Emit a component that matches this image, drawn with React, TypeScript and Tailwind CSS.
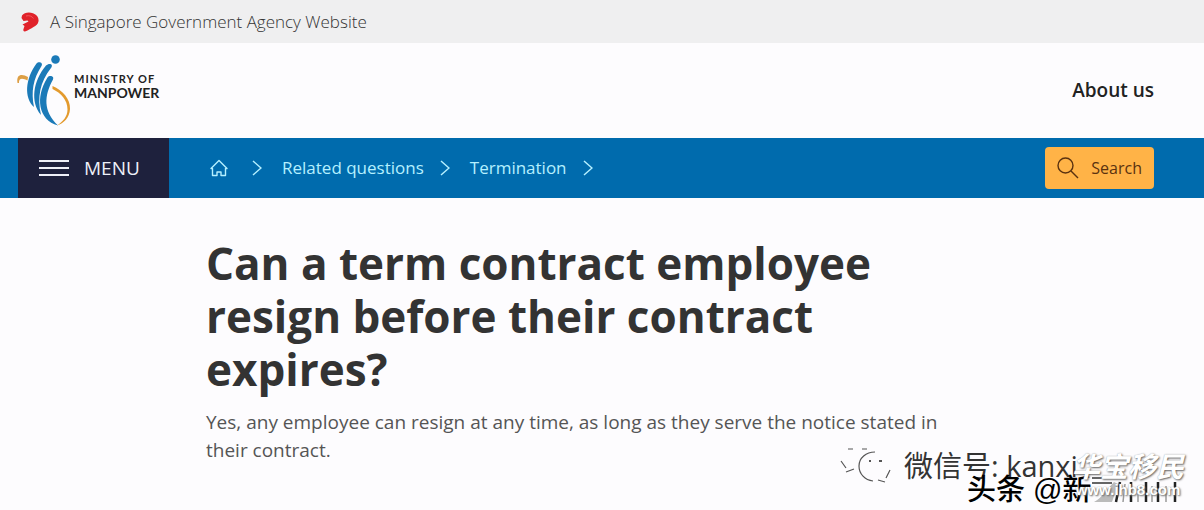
import { Fragment } from "react";

const breadcrumbs = [
  { label: "Related questions", href: "#related" },
  { label: "Termination", href: "#termination" },
];

function LionIcon() {
  return (
    <svg className="h-5 w-5" viewBox="0 0 20 20" aria-hidden="true">
      <path
        d="M2 3.500C4 .5 9-.2 13 1.200c4 1.300 6 4.800 5.500 8-.4 3-2.500 4.300-5 5.800-2.500 1.600-5 3.200-8.500 4.500-1.500.3-2-1-1.500-2.500L4.500 14 2.500 12.500 8.500 9.500 7.500 8.500 3.500 9 1.500 6z"
        fill="#e0222a"
      />
      <path d="M6 4c3-.8 6 0 7.500 2.500" fill="none" stroke="#f0565a" strokeWidth="1" />
    </svg>
  );
}

function MinistryLogo() {
  return (
    <svg className="h-[74px] w-14" viewBox="0 0 56 74" aria-hidden="true">
      <path d="M1.500 29C0 20 6 19.500 12 23l-.5 3.500C7 24 2.500 23.500 3 29z" fill="#dd9f45" />
      <path d="M36.500 32c10 4 18 13 17.500 23-.6 9-6 14-13 16.500 6-4 10.500-9 10.500-16C51.500 46 45 39 36.500 35z" fill="#e39a2d" />
      <circle cx="39.500" cy="5.500" r="4.300" fill="#1b7ab8" />
      <path d="M20.500 9.500c2-2.500 7-1 5 2.500C17 25 15 38 18 53 8 44 9 25 20.500 9.500z" fill="#1b7ab8" />
      <path d="M30 11.500c3-3 8-1.500 5 2.500C24 28 21 43 25 61 14 48 17 27 30 11.500z" fill="#1b7ab8" />
      <path d="M31.500 23.500c2-2.500 7-1.500 5.500 2C28 42 27 57 42 71.500 22 66 19 43 31.500 23.500z" fill="#1b7ab8" />
    </svg>
  );
}

function HomeIcon() {
  return (
    <svg className="h-[18px] w-[18px]" viewBox="0 0 18 18" fill="none" stroke="currentColor" strokeWidth="1.400" aria-hidden="true">
      <path d="M1 9.500 9 1.500l8 8h-1.500v7H11v-3.500H7v3.500H2.500v-7z" strokeLinejoin="round" />
    </svg>
  );
}

function Chevron() {
  return (
    <svg className="h-4 w-2.5" viewBox="0 0 10 16" fill="none" stroke="currentColor" strokeWidth="1.500" aria-hidden="true">
      <path d="M1 1l8 7-8 7" />
    </svg>
  );
}

function WeChatIcon() {
  return (
    <svg className="h-10 w-[52px]" viewBox="0 0 52 40" fill="none" stroke="#555" strokeWidth="1.200" aria-hidden="true">
      <path d="M8 3h5M22 3h5M1 15l5 7M6 26l8-3M35 6c-9 0-16 6-16 14 0 8 6 14 14 15M38 34l7 2M46 32l4-8" />
      <path d="M29 15h2M39 15h3" strokeWidth="2" />
    </svg>
  );
}

function Streaks() {
  return (
    <svg className="h-7 w-[90px]" viewBox="0 0 90 28" aria-hidden="true">
      <path d="M0 2h26M0 7h20" stroke="#333" strokeWidth="1.500" />
      <path d="M2 26C10 22 14 14 22 6l4 2-6 18z" fill="#bbb" />
      <path d="M28 6l-4 20M39 6v20M54 6v20M66 6v20M83 6v20" stroke="#222" strokeWidth="2.500" />
      <path d="M33 8l-2 18M46 10v16M60 10v16M74 10v16" stroke="#999" strokeWidth="1.500" />
    </svg>
  );
}

function Watermarks() {
  return (
    <div className="pointer-events-none absolute right-0 bottom-0 h-[68px] w-[368px] font-['Open_Sans','Noto_Sans_CJK_SC',sans-serif] whitespace-nowrap">
      <div className="absolute top-1 left-1 flex items-center gap-3">
        <WeChatIcon />
        <span className="text-[29px] leading-10 text-[#333]">微信号: kanxi</span>
      </div>
      <div className="absolute top-[30px] left-[131px] flex items-center font-['Liberation_Sans','Noto_Sans_CJK_SC',sans-serif]">
        <span className="text-[29px] leading-9 font-medium text-black">头条 @新</span>
        <Streaks />
      </div>
      <div className="absolute top-2 right-4 flex w-[120px] flex-col items-center text-white [text-shadow:1px_1px_2px_#666,0_0_1px_#aaa]">
        <span className="text-[28px] leading-8 font-bold italic">华宝移民</span>
        <span className="font-['Liberation_Sans',sans-serif] text-[15px] leading-4 font-bold">www.ihb8.com</span>
      </div>
    </div>
  );
}

export default function App() {
  return (
    <div className="relative min-h-screen overflow-hidden bg-[#fdfcfe] font-['Open_Sans',sans-serif] text-[#333]">
      <div className="flex h-[43px] items-center gap-2.5 bg-[#efeff0] px-5 text-[#333]">
        <LionIcon />
        <span className="text-[17px] font-light">A Singapore Government Agency Website</span>
      </div>

      <header className="flex h-[95px] items-center justify-between pr-[50px] pl-4">
        <a href="#home" className="flex items-center gap-0.5 text-[#222]">
          <MinistryLogo />
          <span className="flex flex-col pb-2 font-['Lato',sans-serif] font-bold">
            <span className="text-[11px] leading-3 tracking-widest">MINISTRY OF</span>
            <span className="text-sm leading-4">MANPOWER</span>
          </span>
        </a>
        <a href="#about" className="text-[19px] font-semibold text-[#222]">About us</a>
      </header>

      <nav className="flex h-[60px] items-center bg-[#006bad] pr-[50px] pl-[18px]">
        <button className="flex h-full w-[151px] items-center gap-[15px] bg-[#1e213d] pl-[21px] text-[19px] text-[#eef0f8]">
          <svg className="h-[18px] w-[30px]" viewBox="0 0 30 18" stroke="currentColor" strokeWidth="2" aria-hidden="true">
            <path d="M0 2h30M0 9h30M0 16h30" />
          </svg>
          MENU
        </button>
        <div className="flex flex-1 items-center pl-[41px] text-[17px] text-[#b5f0ff]">
          <a href="#home" aria-label="Home" className="mr-6">
            <HomeIcon />
          </a>
          <Chevron />
          {breadcrumbs.map((crumb) => (
            <Fragment key={crumb.label}>
              <a href={crumb.href} className="mr-4 ml-5">{crumb.label}</a>
              <Chevron />
            </Fragment>
          ))}
        </div>
        <button className="flex h-[42px] items-center gap-3 rounded bg-[#ffb347] px-3 text-base text-[#5a3210]">
          <svg className="h-[22px] w-[22px]" viewBox="0 0 22 22" fill="none" stroke="currentColor" strokeWidth="1.400" aria-hidden="true">
            <circle cx="8.500" cy="8.500" r="7.500" />
            <path d="M14 14l7 7" />
          </svg>
          Search
        </button>
      </nav>

      <main className="px-[206px] pt-[39px]">
        <h1 className="max-w-[700px] text-[44px] leading-[53px] font-bold">
          Can a term contract employee resign before their contract expires?
        </h1>
        <p className="mt-3 max-w-[740px] text-[19px] leading-7 text-[#555]">
          Yes, any employee can resign at any time, as long as they serve the notice stated in their contract.
        </p>
      </main>

      <Watermarks />
    </div>
  );
}
